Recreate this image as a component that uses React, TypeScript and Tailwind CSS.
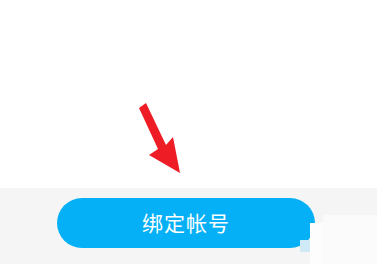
import React from 'react';

const Arrow = () => (
  <svg width="377" height="188" viewBox="0 0 377 188" className="absolute left-0 top-0">
    <polygon
      fill="#ee1c25"
      points="139,108 146,103 166,145 173,137 180,173 149,155 158,149"
    />
  </svg>
);

export default function App() {
  return (
    <div className="w-[377px] h-[264px] flex flex-col bg-white overflow-hidden" style={{ fontFamily: '"Noto Sans CJK SC", "Noto Sans", sans-serif' }}>
      <div className="relative h-[188px] bg-white">
        <Arrow />
      </div>
      <div className="relative flex-1 bg-[#f5f5f5] pt-[10px] pl-[57px]">
        <button className="w-[258px] h-[50px] rounded-full bg-[#05b0f6] text-white text-[21px] tracking-[1px] flex items-center justify-center">
          绑定帐号
        </button>
        {/* faint watermark blocks */}
        <div className="absolute left-[323px] top-[27px] w-[54px] h-[49px] bg-[#fbfbfb]" />
        <div className="absolute left-[310px] top-[35px] w-[13px] h-[41px] bg-[#fdfdfd]" />
        <div className="absolute left-[300px] top-[52px] w-[10px] h-[12px] bg-[#cfe9f6]" />
      </div>
    </div>
  );
}
